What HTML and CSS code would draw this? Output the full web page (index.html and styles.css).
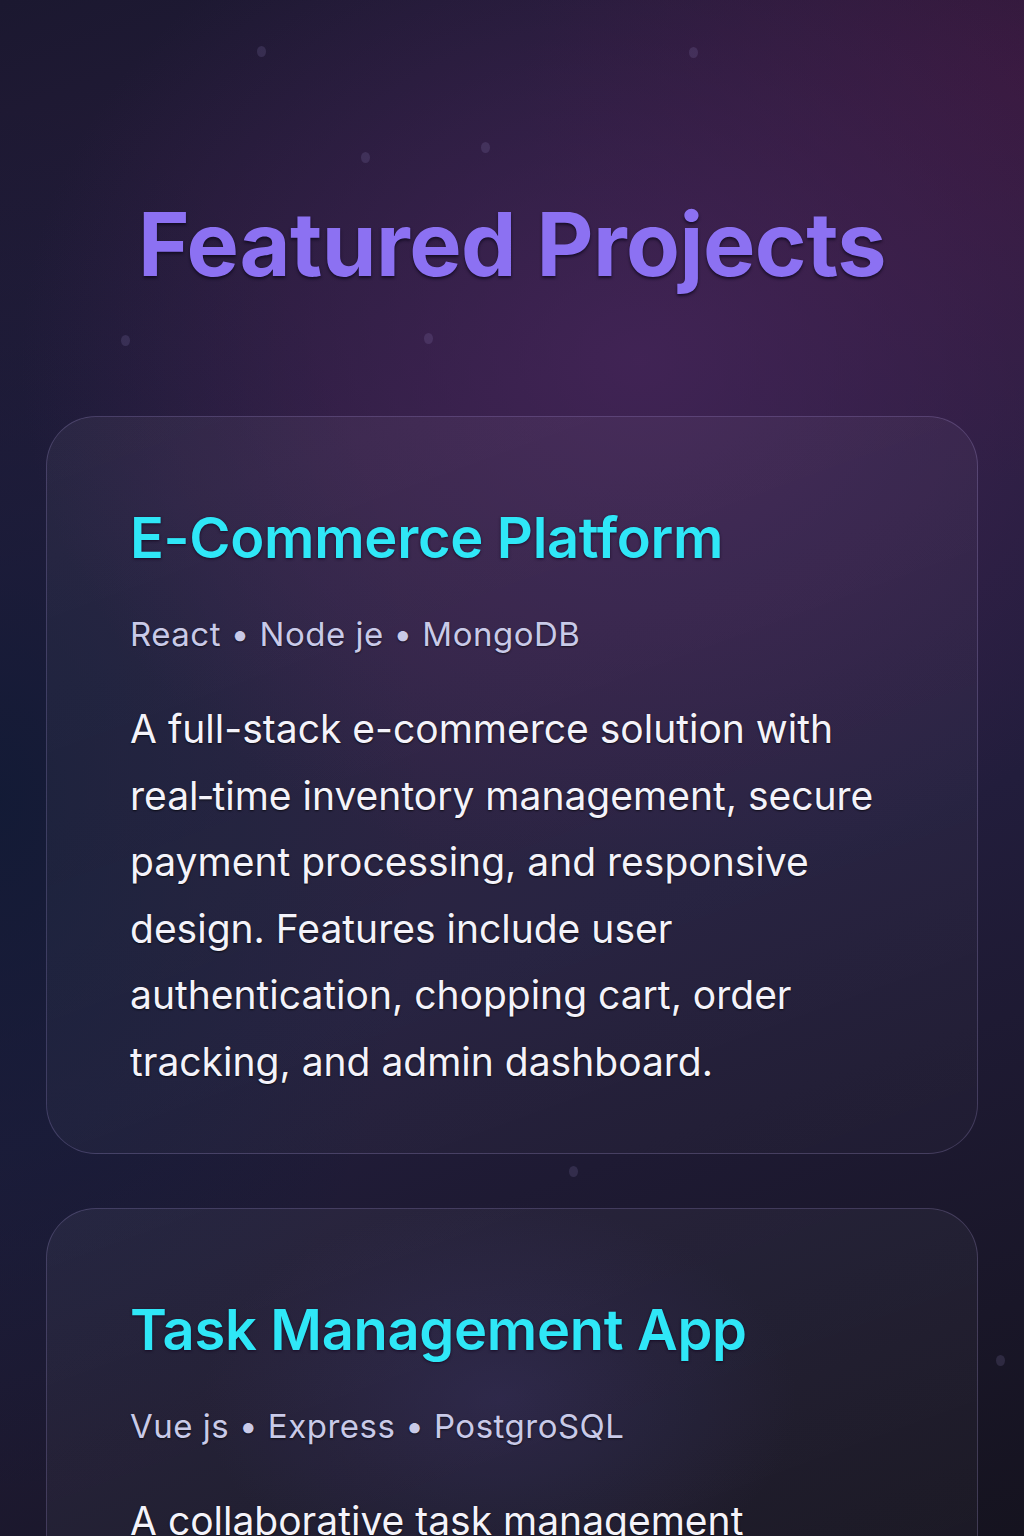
FILE: index.html
```html
<!DOCTYPE html>
<html lang="en">
<head>
<meta charset="utf-8">
<title>Featured Projects</title>
<link rel="stylesheet" href="styles.css">
</head>
<body>
<div class="page">
  <div class="glow"></div>
  <span class="dot" style="left:257px;top:46px"></span>
  <span class="dot" style="left:689px;top:47px"></span>
  <span class="dot" style="left:361px;top:152px"></span>
  <span class="dot" style="left:481px;top:142px"></span>
  <span class="dot" style="left:424px;top:333px"></span>
  <span class="dot" style="left:121px;top:335px"></span>
  <span class="dot" style="left:569px;top:1166px"></span>
  <span class="dot" style="left:996px;top:1355px"></span>

  <section class="projects">
    <h1 class="heading">Featured Projects</h1>

    <article class="card">
      <h2 class="card-title">E-Commerce Platform</h2>
      <p class="tech">React • Node je • MongoDB</p>
      <p class="desc">A full-stack e-commerce solution with real&#8209;time inventory management, secure payment processing, and responsive design. Features include user authentication, chopping cart, order tracking, and admin dashboard.</p>
    </article>

    <article class="card">
      <h2 class="card-title">Task Management App</h2>
      <p class="tech">Vue js • Express • PostgroSQL</p>
      <p class="desc">A collaborative task management application with real&#8209;time updates, drag-and-drop boards, team workspaces, and deadline notifications.</p>
    </article>
  </section>
</div>
</body>
</html>
```

FILE: styles.css
```css
* { box-sizing: border-box; margin: 0; padding: 0; }

html, body {
  width: 1024px;
  height: 1536px;
  overflow: hidden;
  background: #181628;
}

body {
  font-family: Inter, "Noto Sans", sans-serif;
}

.page {
  position: relative;
  width: 1024px;
  height: 1536px;
  overflow: hidden;
  background:
    radial-gradient(ellipse 620px 520px at 640px 360px, rgba(74, 38, 94, 0.7), rgba(74, 38, 94, 0) 100%),
    radial-gradient(ellipse 500px 400px at 1024px 80px, rgba(60, 24, 62, 0.8), rgba(60, 24, 62, 0) 100%),
    radial-gradient(ellipse 420px 700px at 0px 800px, rgba(14, 26, 52, 0.8), rgba(14, 26, 52, 0) 100%),
    linear-gradient(160deg, #1b1830 0%, #2a1d3e 30%, #221d3c 60%, #15131f 100%);
}

.glow {
  position: absolute;
  left: 200px;
  top: 1200px;
  width: 600px;
  height: 400px;
  background: radial-gradient(ellipse at center, rgba(60, 50, 110, 0.35), rgba(60, 50, 110, 0) 70%);
  pointer-events: none;
}

.dot {
  position: absolute;
  width: 9px;
  height: 11px;
  border-radius: 50%;
  background: rgba(160, 150, 210, 0.16);
}

.projects {
  position: relative;
  display: flex;
  flex-direction: column;
  align-items: center;
  padding: 190px 46px 0;
}

.heading {
  font-size: 88px;
  font-weight: 700;
  line-height: 108px;
  letter-spacing: -0.5px;
  color: #8c71f2;
  text-shadow: 0 2px 3px rgba(10, 5, 25, 0.7);
  margin-bottom: 118px;
}

.card {
  width: 932px;
  border-radius: 50px;
  border: 1px solid rgba(200, 180, 255, 0.2);
  background: linear-gradient(160deg, rgba(255, 255, 255, 0.05) 0%, rgba(255, 255, 255, 0.035) 50%, rgba(255, 255, 255, 0.02) 100%);
  padding: 86px 60px 58px 83px;
  margin-bottom: 54px;
  display: flex;
  flex-direction: column;
}

.card-title {
  font-size: 56px;
  font-weight: 600;
  line-height: 70px;
  letter-spacing: -0.3px;
  color: #2fe7f7;
  text-shadow: 0 1px 3px rgba(20, 5, 30, 0.8);
  margin-bottom: 38px;
}

.tech {
  font-size: 33px;
  font-weight: 400;
  line-height: 46px;
  letter-spacing: 0.5px;
  color: #c9cae8;
  text-shadow: 0 1px 2px rgba(0, 0, 0, 0.6);
  margin-bottom: 39px;
}

.desc {
  font-size: 39px;
  font-weight: 400;
  line-height: 66.5px;
  color: #f4f3fa;
  text-shadow: 0 1px 2px rgba(0, 0, 0, 0.7);
  max-width: 775px;
}
```
